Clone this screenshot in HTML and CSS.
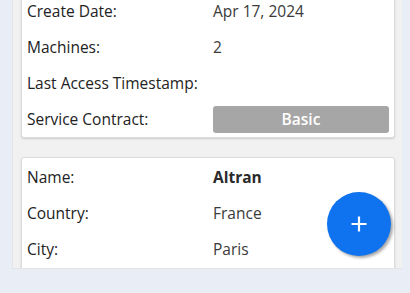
FILE: index.html
```html
<!DOCTYPE html>
<html>
<head>
<meta charset="utf-8">
<link rel="stylesheet" href="styles.css">
</head>
<body>
<div class="panel">
  <div class="list">
    <div class="card">
      <div class="row"><span class="label">Create Date:</span><span class="value">Apr 17, 2024</span></div>
      <div class="row"><span class="label">Machines:</span><span class="value">2</span></div>
      <div class="row"><span class="label">Last Access Timestamp:</span><span class="value"></span></div>
      <div class="row"><span class="label">Service Contract:</span><span class="value"><span class="badge">Basic</span></span></div>
    </div>
    <div class="card card-more">
      <div class="row"><span class="label">Name:</span><span class="value strong">Altran</span></div>
      <div class="row"><span class="label">Country:</span><span class="value">France</span></div>
      <div class="row"><span class="label">City:</span><span class="value">Paris</span></div>
    </div>
  </div>
</div>
<button class="fab" aria-label="Add">
  <svg width="18" height="18" viewBox="0 0 18 18"><path d="M9 1.5v15M1.5 9h15" stroke="#fff" stroke-width="2.2" fill="none"/></svg>
</button>
</body>
</html>
```
FILE: styles.css
```css
html, body {
  margin: 0;
  padding: 0;
}
body {
  background: #e9eef6;
  font-family: "Open Sans", "Noto Sans", sans-serif;
  font-size: 15.5px;
  color: #2b2b2b;
  width: 410px;
  height: 293px;
  overflow: hidden;
  position: relative;
}
.panel {
  margin-left: 12px;
  width: 390px;
  height: 269px;
  background: #f1f1f1;
  border-left: 1px solid #e2e4e8;
  border-bottom: 1px solid #e2e4e8;
  box-sizing: border-box;
  overflow: hidden;
}
.list {
  display: flex;
  flex-direction: column;
  gap: 19px;
  margin-top: -9px;
  padding-left: 8px;
  padding-right: 7px;
}
.card {
  background: #fff;
  border: 1px solid #dcdcdc;
  border-radius: 3px;
  box-shadow: 0 1px 2px rgba(0,0,0,0.15);
  padding: 1px 5px 0 5px;
}
.card-more {
  padding-bottom: 24px;
}
.row {
  display: grid;
  grid-template-columns: 186px 1fr;
  height: 36px;
  align-items: center;
}
.label {
  font-weight: 500;
  color: #222;
}
.value {
  color: #3a3a3a;
}
.value.strong {
  font-weight: 700;
  color: #2a2a2a;
}
.badge {
  display: block;
  background: #a6a6a6;
  color: #fff;
  text-align: center;
  border-radius: 3px;
  height: 27px;
  line-height: 27px;
  font-weight: 600;
}
.fab {
  position: absolute;
  left: 327px;
  top: 192px;
  width: 64px;
  height: 64px;
  border-radius: 50%;
  border: none;
  background: #0f72ee;
  box-shadow: 2px 2px 3px rgba(0,0,0,0.35);
  display: flex;
  align-items: center;
  justify-content: center;
  padding: 0;
}
```
